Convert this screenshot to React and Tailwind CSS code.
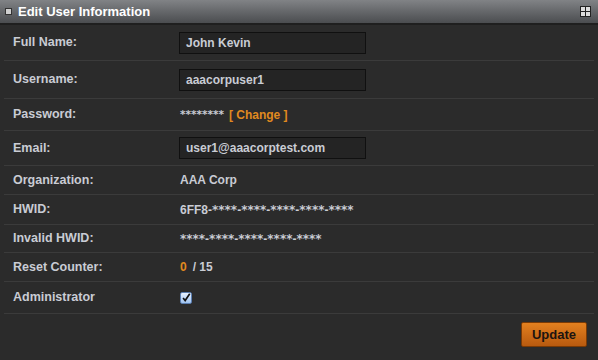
import { useState } from "react";

const font = { fontFamily: '"Liberation Sans", Arial, sans-serif' };

function Row({ label, children, h }) {
  return (
    <div className={`flex items-center border-b border-[#3b3b3b] ${h}`}>
      <div className="w-[175px] pl-[9px] text-[12.5px] font-bold text-[#c9ccd4]">{label}</div>
      <div className="flex items-center text-[12px] font-bold text-[#c9ccd4]">{children}</div>
    </div>
  );
}

function Field({ value }) {
  return (
    <div className="w-[187px] h-[22px] flex items-center px-[6px] bg-[#242424] border border-[#101010] text-[12px] font-bold text-[#c9ccd4]">
      {value}
    </div>
  );
}

// asterisk runs are drawn in DejaVu, which has wider stars than Liberation
function Masked({ text, size = "text-[12px]" }) {
  const parts = text.split(/(\*+)/).filter(Boolean);
  return (
    <span className="flex items-center">
      {parts.map((p, i) =>
        p[0] === "*" ? (
          <span key={i} className={`font-['DejaVu_Sans'] ${size}`}>
            {p}
          </span>
        ) : (
          <span key={i}>{p}</span>
        )
      )}
    </span>
  );
}

export default function App() {
  const [admin, setAdmin] = useState(true);

  return (
    <div style={font} className="w-[598px] h-[360px] bg-[#2b2b2b] flex flex-col">
      <div className="h-[25px] flex items-center justify-between px-[5px] bg-gradient-to-b from-[#818386] to-[#4b4d50] border-b-2 border-[#1f1f1f]">
        <div className="flex items-center gap-[6px]">
          <div className="w-[7px] h-[7px] bg-[#d0d0d0] border border-[#333]" />
          <span className="text-[13px] font-bold text-white">Edit User Information</span>
        </div>
        <div className="grid grid-cols-2 gap-[1px] p-[1px] bg-[#222] mr-[2px]">
          <div className="w-[4px] h-[4px] bg-[#ddd]" />
          <div className="w-[4px] h-[4px] bg-[#ddd]" />
          <div className="w-[4px] h-[4px] bg-[#ddd]" />
          <div className="w-[4px] h-[4px] bg-[#ddd]" />
        </div>
      </div>

      <div className="mx-[4px] flex flex-col">
        <Row label="Full Name:" h="h-[36px]">
          <Field value="John Kevin" />
        </Row>
        <Row label="Username:" h="h-[38px]">
          <Field value="aaacorpuser1" />
        </Row>
        <Row label="Password:" h="h-[32px]">
          <span className="ml-[1px]">
            <Masked text="********" size="text-[10.5px]" />
          </span>
          <span className="ml-[5px] text-[#e08a1f]">[ Change ]</span>
        </Row>
        <Row label="Email:" h="h-[35px]">
          <Field value="user1@aaacorptest.com" />
        </Row>
        <Row label="Organization:" h="h-[29px]">
          <span className="ml-[1px]">AAA Corp</span>
        </Row>
        <Row label="HWID:" h="h-[30px]">
          <span className="ml-[1px]">
            <Masked text="6FF8-****-****-****-****-****" />
          </span>
        </Row>
        <Row label="Invalid HWID:" h="h-[28px]">
          <span className="ml-[1px]">
            <Masked text="****-****-****-****-****" />
          </span>
        </Row>
        <Row label="Reset Counter:" h="h-[29px]">
          <span className="ml-[1px] text-[#e08a1f]">0</span>
          <span className="ml-[6px]">/ 15</span>
        </Row>
        <Row label="Administrator" h="h-[32px]">
          <button
            onClick={() => setAdmin(!admin)}
            className="ml-[1px] w-[12px] h-[12px] rounded-[2px] bg-gradient-to-b from-[#e8f1ff] to-[#9fc3f0] border border-[#5b7eb0] flex items-center justify-center"
          >
            {admin && (
              <svg width="12" height="12" viewBox="0 0 12 12">
                <path d="M2.5 6 L5 9 L10.5 1" stroke="#111" strokeWidth="2" fill="none" />
              </svg>
            )}
          </button>
        </Row>
      </div>

      <div className="flex justify-end pr-[11px] pt-[8px]">
        <button className="w-[66px] h-[25px] rounded-[2px] bg-gradient-to-b from-[#e3801f] to-[#b85a0f] border border-[#7a3a05] text-[13px] font-bold text-[#1c1410]">
          Update
        </button>
      </div>
    </div>
  );
}
